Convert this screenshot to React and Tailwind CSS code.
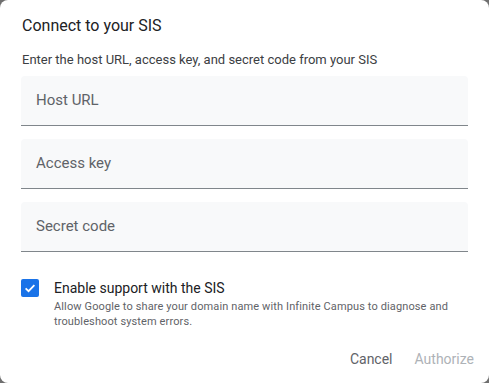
export default function App() {
  const fields = ["Host URL", "Access key", "Secret code"];
  return (
    <div className="w-[489px] h-[383px] bg-[#6f6f6f]" style={{ fontFamily: "Roboto, 'Liberation Sans', sans-serif" }}>
      <div className="w-full h-full bg-white rounded-[8px] flex flex-col px-[21px]">
        <div className="pt-[15px] text-[16px] leading-[22px] text-[#202124] pl-[1px]">Connect to your SIS</div>
        <div className="mt-[14px] text-[13px] leading-[18px] text-[#3c4043] pl-[1px]">
          Enter the host URL, access key, and secret code from your SIS
        </div>
        <div className="mt-[7px] flex flex-col gap-[13px]">
          {fields.map((f) => (
            <div key={f} className="h-[50px] bg-[#f8f9fa] rounded-t-[4px] border-b border-[#80868b] flex items-center pl-[15px]">
              <span className="text-[15px] text-[#5f6368]">{f}</span>
            </div>
          ))}
        </div>
        <div className="mt-[26px] flex gap-[15px]">
          <div className="w-[18px] h-[18px] rounded-[2px] bg-[#1a73e8] flex items-center justify-center shrink-0 mt-[1px]">
            <svg width="14" height="14" viewBox="0 0 24 24" fill="none">
              <path d="M4.5 12.5l5 5 10-10.5" stroke="white" strokeWidth="3" />
            </svg>
          </div>
          <div className="flex flex-col">
            <div className="text-[14px] leading-[20px] text-[#202124]">Enable support with the SIS</div>
            <div className="mt-[1px] text-[11px] leading-[15px] text-[#5f6368] tracking-[0.12px]">
              Allow Google to share your domain name with Infinite Campus to diagnose and
              <br />
              troubleshoot system errors.
            </div>
          </div>
        </div>
        <div className="mt-auto mb-[13px] mr-[-6px] flex justify-end items-center gap-[22px]">
          <span className="text-[14px] text-[#5f6368]">Cancel</span>
          <span className="text-[14px] text-[#9aa0a6] opacity-80">Authorize</span>
        </div>
      </div>
    </div>
  );
}
